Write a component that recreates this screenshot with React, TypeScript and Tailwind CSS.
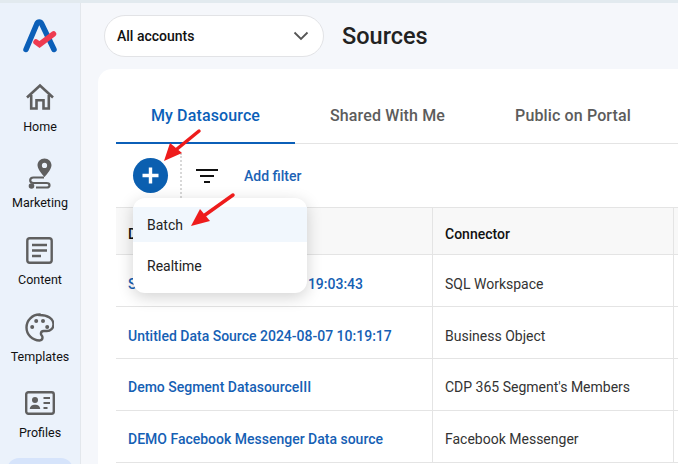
import React from 'react';

const NavItem: React.FC<{ label: string; icon: React.ReactNode; className: string }> = ({ label, icon, className }) => (
  <div className={`flex shrink-0 flex-col items-center ${className}`}>
    <div className="flex h-[30px] w-full items-center justify-center">{icon}</div>
    <span className="mt-[7px] text-[12.5px] leading-[16px] text-[#111]">{label}</span>
  </div>
);

const HomeIcon = () => (
  <svg width="30" height="28" viewBox="0 0 30 28" fill="none" stroke="#5f5f5f" strokeWidth="2.6">
    <path d="M2 14.5 15 2.5l13 12" />
    <path d="M6.2 12v13.5h5.3v-8.2h7v8.2h5.3V12" />
  </svg>
);

const RouteIcon = () => (
  <svg width="26" height="31" viewBox="0 0 26 31" fill="none">
    <path fillRule="evenodd" d="M17.5 0.5c-4 0-7 3-7 6.8 0 4.5 7 11.7 7 11.7s7-7.200 7-11.700c0-3.800-3-6.800-7-6.800zm0 4.300a2.600 2.600 0 1 1 0 5.200 2.600 2.600 0 0 1 0-5.200z" fill="#5f5f5f" />
    <path d="M17 19.500H6.500c-2 0-3.300 1.200-3.300 2.800s1.300 2.700 3.300 2.700h13c1.800 0 3 1 3 2.200s-1.200 2.300-3 2.300H9" stroke="#5f5f5f" strokeWidth="2.200" />
    <circle cx="4.500" cy="28" r="2.800" fill="#5f5f5f" />
  </svg>
);

const ContentIcon = () => (
  <svg width="27" height="27" viewBox="0 0 27 27" fill="none" stroke="#5f5f5f">
    <rect x="1.300" y="1.300" width="24.400" height="24.400" rx="2.500" strokeWidth="2.400" />
    <path d="M6 8h15M6 13.500h15M6 19h9" strokeWidth="2.400" />
  </svg>
);

const PaletteIcon = () => (
  <svg width="29" height="29" viewBox="0 0 29 29" fill="none">
    <path d="M14.500 1.500C7.300 1.500 1.500 7.300 1.500 14.500s5.800 13 13 13c1.800 0 3-1.300 3-2.900 0-.8-.3-1.400-.8-2-.5-.6-.8-1.200-.8-1.900 0-1.500 1.200-2.700 2.800-2.700h3.200c3.600 0 6.600-2.900 6.600-6.500 0-5.700-5.900-9.500-14-9.500z" stroke="#5f5f5f" strokeWidth="2.400" />
    <circle cx="7.200" cy="14" r="2" fill="#5f5f5f" />
    <circle cx="11.200" cy="8" r="2" fill="#5f5f5f" />
    <circle cx="18" cy="8" r="2" fill="#5f5f5f" />
    <circle cx="22.200" cy="14" r="2" fill="#5f5f5f" />
  </svg>
);

const ProfileIcon = () => (
  <svg width="30" height="24" viewBox="0 0 30 24" fill="none">
    <rect x="1.200" y="1.200" width="27.600" height="21.600" rx="2.200" stroke="#5f5f5f" strokeWidth="2.400" />
    <circle cx="10" cy="9" r="3" fill="#5f5f5f" />
    <path d="M4.800 18c0-2.800 2.400-4.300 5.200-4.300s5.200 1.500 5.200 4.300z" fill="#5f5f5f" />
    <path d="M18.500 7h6.500M18.500 12h6.500M18.500 17h4" stroke="#5f5f5f" strokeWidth="2.200" />
  </svg>
);

const rows = [
  { name: 'S', rest: '19:03:43', connector: 'SQL Workspace', pad: 'pt-[7px]' },
  { name: 'Untitled Data Source 2024-08-07 10:19:17', connector: 'Business Object', pad: 'pt-[7px]' },
  { name: 'Demo Segment DatasourceIII', connector: "CDP 365 Segment's Members", pad: 'pt-[5px]' },
  { name: 'DEMO Facebook Messenger Data source', connector: 'Facebook Messenger', pad: 'pt-[5px]' },
];

export default function App() {
  return (
    <div className="relative flex h-[464px] w-[678px] overflow-hidden border-t-[3px] border-[#e2eaef] bg-[#f5f7fb] text-[14px] text-[#222]" style={{ fontFamily: 'Roboto, sans-serif' }}>
      {/* Sidebar */}
      <aside className="relative flex w-[81px] shrink-0 flex-col items-center overflow-hidden border-r border-[#e3e7ec] bg-[#ebf2fb]">
        <svg className="mt-[16px] shrink-0" width="36" height="36" viewBox="0 0 36 36" fill="none" strokeLinecap="round">
          <path d="M4 30.500 15 4.500c1-2 3.500-2 4.500 0L32 30.500" stroke="#0b5fb8" strokeWidth="5.500" strokeLinejoin="round" />
          <path d="M14 23l3.500 2.500L31.500 15" stroke="#ee3b50" strokeWidth="5.500" />
        </svg>
        <NavItem className="mt-[27px]" label="Home" icon={<HomeIcon />} />
        <NavItem className="mt-[23px]" label="Marketing" icon={<RouteIcon />} />
        <NavItem className="mt-[24px]" label="Content" icon={<ContentIcon />} />
        <NavItem className="mt-[24px]" label="Templates" icon={<PaletteIcon />} />
        <NavItem className="mt-[23px]" label="Profiles" icon={<ProfileIcon />} />
        <div className="mt-[17px] h-[40px] w-[66px] shrink-0 rounded-[12px] bg-[#d6e4fb]" />
      </aside>

      {/* Main */}
      <main className="min-w-0 flex-1 pl-[17px]">
        <header className="flex h-[66px] items-center pl-[6px]">
          <div className="flex h-[42px] w-[220px] items-center justify-between rounded-full border border-[#e2e3e6] bg-white pl-[12px] pr-[14px]">
            <span className="pt-[1px] text-[14px] font-medium text-[#111]">All accounts</span>
            <svg width="16" height="10" viewBox="0 0 16 10" fill="none" stroke="#555" strokeWidth="1.800">
              <path d="M1.500 1.500 8 8l6.500-6.500" />
            </svg>
          </div>
          <h1 className="ml-[18px] pt-[2px] text-[23.500px] font-medium text-[#222]">Sources</h1>
        </header>

        <section className="h-[400px] w-[600px] rounded-tl-[14px] bg-white pl-[18px]">
          <div className="flex h-[75px] border-b border-[#e4e4e4] pt-[37px] text-[16px] font-medium leading-[20px] tracking-[0.13px]">
            <div className="-mb-px h-[38px] w-[179px] border-b-2 border-[#0b5fb8] text-center text-[#0b5fb8]">My Datasource</div>
            <div className="w-[185px] text-center text-[#5c5c5c]">Shared With Me</div>
            <div className="w-[186px] text-center text-[#5c5c5c]">Public on Portal</div>
          </div>

          <div className="flex h-[63px] items-center pl-[17px]">
            <div className="flex h-[35px] w-[35px] items-center justify-center rounded-full bg-[#0b5fb0]">
              <svg width="17" height="17" viewBox="0 0 17 17" fill="none" stroke="#fff" strokeWidth="3.400">
                <path d="M8.500 0.500v16M0.500 8.500h16" />
              </svg>
            </div>
            <div className="ml-[12px] h-[45px] border-l-2 border-dotted border-[#d8d8d8]" />
            <svg className="ml-[14px]" width="22" height="16" viewBox="0 0 22 16" fill="none" stroke="#111" strokeWidth="2">
              <path d="M0 2h22M4 8h14M8 14h6" />
            </svg>
            <span className="ml-[26px] pt-[2px] text-[14px] font-medium text-[#1b62b5]">Add filter</span>
          </div>

          <div className="grid grid-cols-[316px_241px_1fr] border-y border-[#e4e4e4] bg-[#f8f8f8] font-medium text-[#111]">
            <div className="h-[46px] pt-[16px] pl-[12px] leading-[20px]">Datasource</div>
            <div className="h-[46px] border-l border-[#e4e4e4] pt-[16px] pl-[12px] leading-[20px]">Connector</div>
            <div className="h-[46px] border-l border-[#e4e4e4]" />
          </div>
          {rows.map((r) => (
            <div key={r.name} className="grid h-[52px] grid-cols-[316px_241px_1fr] border-b border-[#e4e4e4]">
              <div className={`flex items-center justify-between whitespace-nowrap pl-[12px] pr-[69px] font-medium text-[#1560b4] ${r.pad}`}>
                <span>{r.name}</span>
                {r.rest && <span>{r.rest}</span>}
              </div>
              <div className={`flex items-center whitespace-nowrap border-l border-[#e4e4e4] pl-[12px] text-[#333] ${r.pad}`}>{r.connector}</div>
              <div className="border-l border-[#e4e4e4]" />
            </div>
          ))}
        </section>
      </main>

      {/* Popup menu */}
      <div className="absolute left-[133px] top-[195px] h-[95px] w-[174px] rounded-[12px] bg-white pt-[9px] text-[14px] text-[#222] shadow-[0_4px_16px_rgba(0,0,0,0.18)]">
        <div className="flex h-[35px] items-center bg-[#f1f7fd] pt-[2px] pl-[14px]">Batch</div>
        <div className="mt-[6px] flex h-[35px] items-center pt-[2px] pl-[14px]">Realtime</div>
      </div>

      {/* Annotation arrows */}
      <svg className="pointer-events-none absolute left-0 top-[-3px]" width="678" height="464" viewBox="0 0 678 464" fill="none">
        <path d="M199 131 177 149" stroke="#ee1c1c" strokeWidth="3.500" strokeLinecap="round" />
        <path d="M164 161 170 143 182 153z" fill="#ee1c1c" />
        <path d="M233 195 205 215" stroke="#ee1c1c" strokeWidth="3.500" strokeLinecap="round" />
        <path d="M191 226 200 209 210 221z" fill="#ee1c1c" />
      </svg>
    </div>
  );
}
